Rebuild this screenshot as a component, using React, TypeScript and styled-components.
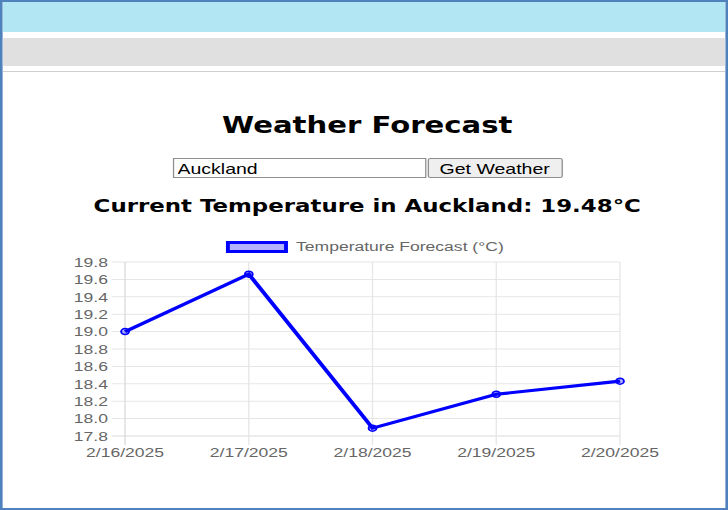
import React from "react";
import styled, { createGlobalStyle } from "styled-components";

const GlobalStyle = createGlobalStyle`
  html, body { margin: 0; padding: 0; background: #fff; overflow: hidden; }
  body { font-family: "Liberation Sans", Arial, sans-serif; }
`;

const Stage = styled.div`
  width: 560px;
  height: 510px;
  box-sizing: border-box;
  border: 2px solid #4f81bd;
  transform: scaleX(1.3);
  transform-origin: 0 0;
  display: flex;
  flex-direction: column;
  background: #fff;
  overflow: hidden;
`;

const Banner = styled.header`
  flex: none;
  height: 30px;
  background: #b3e6f3;
`;

const Toolbar = styled.nav`
  flex: none;
  height: 28px;
  margin-top: 6px;
  background: #e0e0e0;
`;

const Divider = styled.hr`
  flex: none;
  margin: 5px 0 0;
  border: 0;
  height: 1px;
  background: #cfcfcf;
`;

const Controls = styled.main`
  display: flex;
  flex-direction: column;
  align-items: center;
  padding-left: 5px;
`;

const Title = styled.h1`
  margin: 38px 0 0;
  font: bold 22.4px/30px "DejaVu Sans", Verdana, sans-serif;
  color: #000;
  white-space: nowrap;
`;

const SearchRow = styled.form`
  display: flex;
  margin: 18px 0 0;
  height: 20px;
`;

const CityInput = styled.input`
  width: 195px;
  height: 20px;
  box-sizing: border-box;
  margin: 0;
  padding: 0 3px;
  border: 1px solid #8f8f8f;
  font: 15px "Liberation Sans", Arial, sans-serif;
  color: #000;
  background: #fff;
`;

const SubmitButton = styled.button`
  width: 104px;
  height: 20px;
  box-sizing: border-box;
  margin: 0 0 0 1px;
  padding: 0;
  border: 1px solid #8f8f8f;
  border-radius: 2px;
  background: #efefef;
  font: 15px "Liberation Sans", Arial, sans-serif;
  color: #000;
`;

const CurrentTemp = styled.h2`
  margin: 16px 0 0;
  font: bold 17.6px/24px "DejaVu Sans", Verdana, sans-serif;
  color: #000;
  white-space: nowrap;
`;

const ChartSvg = styled.svg`
  display: block;
  flex: none;
  margin-top: 12px;
`;

const values = [19.0, 19.66, 17.89, 18.28, 18.43];
const dates = ["2/16/2025", "2/17/2025", "2/18/2025", "2/19/2025", "2/20/2025"];
const SHIFT = -2;
const X0 = 96.2 + SHIFT;
const XSTEP = 95.18;
const YTOP = 262;
const YSTEP = 17.4;
const yOf = (v: number) => YTOP + ((19.8 - v) / 0.2) * YSTEP;
const xOf = (i: number) => X0 + i * XSTEP;
const yTicks = Array.from({ length: 11 }, (_, i) => 19.8 - i * 0.2);
const GRID = "#e6e6e6";
const LABEL = "#666";
const FONT = '"Liberation Sans", Arial, sans-serif';

function TemperatureChart() {
  const xEnd = xOf(4);
  const yBottom = yOf(17.8);
  const points = values.map((v, i) => `${xOf(i)},${yOf(v)}`).join(" ");
  return (
    <ChartSvg width={556} height={240} viewBox="0 230 556 240">
      <rect x={175.3 + SHIFT} y={242.5} width={44.7} height={9} fill="rgba(0,0,255,0.3)" stroke="#0000ff" strokeWidth={3} />
      <text x={227.7 + SHIFT} y={251.5} fontFamily={FONT} fontSize={13.5} fill={LABEL}>
        Temperature Forecast (°C)
      </text>
      {yTicks.map((t, i) => (
        <g key={`y${i}`}>
          <line x1={86 + SHIFT} x2={xEnd} y1={yOf(t)} y2={yOf(t)} stroke={i === 10 ? "#d9d9d9" : GRID} strokeWidth={1} />
          <text x={83 + SHIFT} y={yOf(t) + 4.8} textAnchor="end" fontFamily={FONT} fontSize={13.5} fill={LABEL}>
            {t.toFixed(1)}
          </text>
        </g>
      ))}
      {dates.map((d, i) => (
        <g key={d}>
          <line x1={xOf(i)} x2={xOf(i)} y1={YTOP} y2={yBottom + 9} stroke={i === 0 ? "#d9d9d9" : GRID} strokeWidth={1} />
          <text x={xOf(i)} y={456.7} textAnchor="middle" fontFamily={FONT} fontSize={13.5} fill={LABEL}>
            {d}
          </text>
        </g>
      ))}
      <polyline points={points} fill="none" stroke="#0000ff" strokeWidth={3.2} strokeLinejoin="miter" />
      {values.map((v, i) => (
        <circle key={`p${i}`} cx={xOf(i)} cy={yOf(v)} r={3} fill="rgba(0,0,255,0.3)" stroke="#0000ff" strokeWidth={1.5} />
      ))}
    </ChartSvg>
  );
}

export default function App() {
  return (
    <>
      <GlobalStyle />
      <Stage>
        <Banner />
        <Toolbar />
        <Divider />
        <Controls>
          <Title>Weather Forecast</Title>
          <SearchRow onSubmit={(e) => e.preventDefault()}>
            <CityInput type="text" defaultValue="Auckland" />
            <SubmitButton type="submit">Get Weather</SubmitButton>
          </SearchRow>
          <CurrentTemp>Current Temperature in Auckland: 19.48°C</CurrentTemp>
        </Controls>
        <TemperatureChart />
      </Stage>
    </>
  );
}
